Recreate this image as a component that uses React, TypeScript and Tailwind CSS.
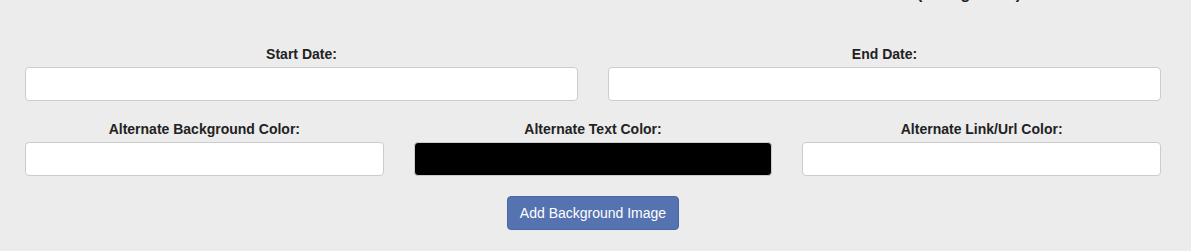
export default function App() {
  const label = 'block text-center text-[14px] font-bold leading-[20px] text-[#222] mb-[3px]';
  const input = 'block w-full h-[34px] rounded-[4px] border border-[#cccccc] bg-white';

  return (
    <div className="flow-root min-h-[251px] w-full overflow-hidden bg-[#ececec] font-['Liberation_Sans',Arial,sans-serif] text-[#222]">
      <div className="-mt-[15px] flex justify-end pr-[170px] text-[16px] font-bold leading-[18px]">
        <span>(Background)</span>
      </div>

      <div className="ml-[10px] mr-[15px] mt-[41px]">
        <div className="grid grid-cols-2">
          <div className="px-[15px]">
            <label className={label}>Start Date:</label>
            <input type="text" className={input} />
          </div>
          <div className="px-[15px]">
            <label className={label}>End Date:</label>
            <input type="text" className={input} />
          </div>
        </div>

        <div className="mt-[18px] grid grid-cols-3">
          <div className="px-[15px]">
            <label className={label}>Alternate Background Color:</label>
            <input type="text" className={input} />
          </div>
          <div className="px-[15px]">
            <label className={label}>Alternate Text Color:</label>
            <input type="text" className="block w-full h-[34px] rounded-[4px] border border-[#cccccc] bg-black" />
          </div>
          <div className="px-[15px]">
            <label className={label}>Alternate Link/Url Color:</label>
            <input type="text" className={input} />
          </div>
        </div>

        <div className="mt-[20px] flex justify-center">
          <button className="h-[34px] rounded-[4px] border border-[#4a66a3] bg-[#5673b1] px-[12px] text-[14px] text-white">
            Add Background Image
          </button>
        </div>
      </div>
    </div>
  );
}
